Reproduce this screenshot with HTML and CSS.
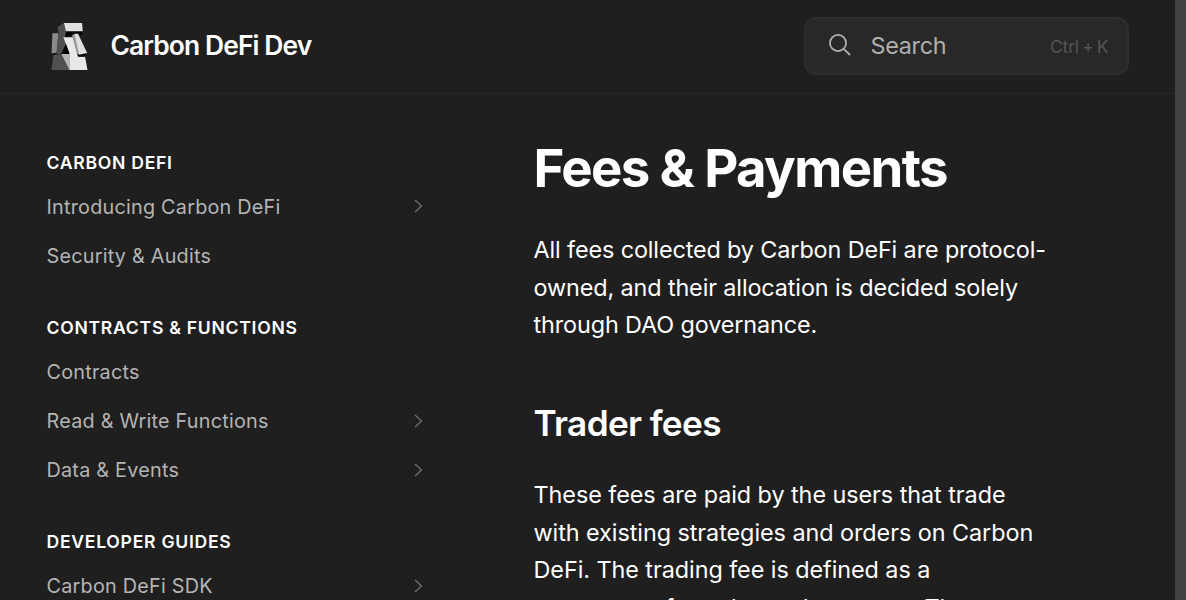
FILE: index.html
```html
<!DOCTYPE html>
<html lang="en">
<head>
<meta charset="utf-8">
<title>Fees &amp; Payments</title>
<link rel="stylesheet" href="styles.css">
</head>
<body>
<div class="page">
  <header class="topbar">
    <a class="brand">
      <svg class="logo" width="37" height="48" viewBox="0 0 37 48">
        <path fill="#8b8b8b" d="M1.4 10.3H7.4L5.7 30.3H.6Z"/>
        <path fill="#505050" d="M13 0 15.5 7.7V13L12.6 15.3 15 21 10.3 31H5.2L7.6 10 6.6 4Z"/>
        <path fill="#050505" d="M15 7.7H32L30 12.5H21L14 14.5Z"/>
        <path fill="#e2e2e2" d="M13 0H31L31.8 8.2H15Z"/>
        <path fill="#e8e8e8" d="M12.3 14.3H22L27 33.5H34L36.5 47H18.3V30Z"/>
        <path fill="#050505" d="M15 21 10 31H18.5ZM2 30.3H6L5 32H1.8ZM26.3 31.5 35.5 30 33.5 33.8H27.5Z"/>
        <path fill="#999" d="M21 12 24 11 30 31H26.3Z"/>
        <path fill="#e0e0e0" d="M23.5 10.7H27L36.2 30 28 31.8Z"/>
        <path fill="#505050" d="M2.5 31.5H10.3L18.3 47H.5Z"/>
        <path fill="#b5b5b5" d="M10.3 31H18.3V47Z"/>
      </svg>
      <span class="brand-name">Carbon DeFi Dev</span>
    </a>
    <div class="search">
      <svg class="search-icon" width="22" height="22" viewBox="0 0 22 22"><circle cx="9" cy="9" r="8.1"/><path d="M14.8 14.8 21 21"/></svg>
      <span class="search-label">Search</span>
      <span class="shortcut">Ctrl + K</span>
    </div>
  </header>
  <div class="columns">
    <nav class="sidebar">
      <section class="group">
        <h3 class="group-title">Carbon DeFi</h3>
        <a class="link">Introducing Carbon DeFi <svg class="chevron" viewBox="0 0 9 14"><path d="M1 1 7.5 7 1 13"/></svg></a>
        <a class="link">Security &amp; Audits</a>
      </section>
      <section class="group">
        <h3 class="group-title">Contracts &amp; Functions</h3>
        <a class="link">Contracts</a>
        <a class="link">Read &amp; Write Functions <svg class="chevron" viewBox="0 0 9 14"><path d="M1 1 7.5 7 1 13"/></svg></a>
        <a class="link">Data &amp; Events <svg class="chevron" viewBox="0 0 9 14"><path d="M1 1 7.5 7 1 13"/></svg></a>
      </section>
      <section class="group">
        <h3 class="group-title">Developer Guides</h3>
        <a class="link">Carbon DeFi SDK <svg class="chevron" viewBox="0 0 9 14"><path d="M1 1 7.5 7 1 13"/></svg></a>
      </section>
    </nav>
    <main class="content">
      <h1 class="title">Fees &amp; Payments</h1>
      <p class="text intro">All fees collected by Carbon DeFi are protocol-<br>owned, and their allocation is decided solely<br>through DAO governance.</p>
      <h2 class="subtitle">Trader fees</h2>
      <p class="text">These fees are paid by the users that trade<br>with existing strategies and orders on Carbon<br>DeFi. The trading fee is defined as a<br>percentage from the trade amount. The</p>
    </main>
  </div>
</div>
<div class="scrollbar"></div>
</body>
</html>
```
FILE: styles.css
```css
* { box-sizing: border-box; }
body { margin: 0; height: 600px; display: flex; overflow: hidden; background: #1f1f1f; color: #fff; font-family: Inter, sans-serif; }
.page { flex: 1; height: 600px; overflow: hidden; }
.scrollbar { width: 11px; height: 600px; background: #424242; }
.topbar { height: 94px; padding: 0 46px 2px 51px; display: flex; align-items: center; justify-content: space-between; border-bottom: 1px solid #282828; }
.brand { display: flex; align-items: center; gap: 22.5px; }
.logo { display: block; margin-top: 2px; }
.brand-name { margin-bottom: 2px; font-size: 26.4px; font-weight: 600; letter-spacing: -0.9px; white-space: nowrap; }
.search { width: 325px; height: 58px; padding: 0 18.5px 0 22.5px; display: flex; align-items: center; border: 2px solid #2e2e2e; border-radius: 12px; background: #282828; }
.search-icon { margin-bottom: 1px; fill: none; stroke: #b0b0b0; stroke-width: 1.8; }
.search-label { margin-left: 20px; font-size: 23.4px; letter-spacing: -0.3px; color: #b0b0b0; }
.shortcut { margin-left: auto; padding-top: 1px; font-size: 17.6px; word-spacing: -1.5px; letter-spacing: -0.2px; color: #555; }
.columns { display: flex; }
.sidebar { width: 425px; padding: 55px 0 0 46.5px; }
.group { margin-bottom: 26.5px; }
.group-title { margin: 0 0 11.8px; font-size: 17.6px; line-height: 28px; font-weight: 600; letter-spacing: 0.72px; text-transform: uppercase; }
.link { height: 49.3px; display: flex; align-items: center; justify-content: space-between; padding-bottom: 13px; font-size: 19.8px; letter-spacing: 0.24px; color: #b5b5b5; }
.chevron { width: 9px; height: 14px; margin: 0 2px 1px 0; fill: none; stroke: #6d6d6d; stroke-width: 1.4; }
.content { padding: 40px 0 0 108.5px; white-space: nowrap; }
.title { margin: 0; font-size: 52.7px; line-height: 68px; font-weight: 700; letter-spacing: -1.62px; }
.text { margin: 30.5px 0 0; font-size: 23.4px; line-height: 37.5px; letter-spacing: -0.06px; }
.intro { margin-top: 29px; letter-spacing: -0.12px; }
.subtitle { margin: 56px 0 0; font-size: 35.2px; line-height: 46px; font-weight: 600; letter-spacing: -0.65px; }
```
